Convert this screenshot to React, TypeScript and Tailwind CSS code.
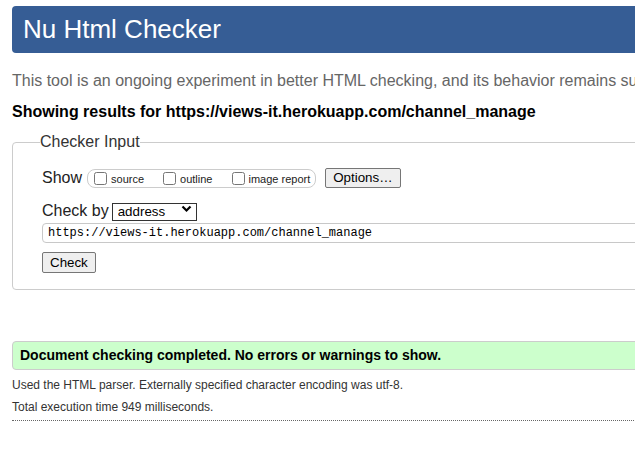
import { useState } from "react";

const url = "https://views-it.herokuapp.com/channel_manage";

const App = () => {
	const [by, setBy] = useState<string>("address");
	const [doc, setDoc] = useState<string>(url);
	return (
		<div className="w-[635px] h-[455px] overflow-hidden bg-white font-['Liberation_Sans',Arial,sans-serif] text-[#222]">
			<div className="w-[1000px] pl-[12px] pt-[6px]">
				<h1 className="h-[47px] flex items-center pl-[11px] pb-[1px] rounded-[4px] bg-[#365d95] text-white text-[26px] font-normal">
					Nu Html Checker
				</h1>

				<p className="mt-[18px] text-[16px] leading-[20px] text-[#666]">
					This tool is an ongoing experiment in better HTML checking, and its behavior remains subject to change
				</p>
				<p className="mt-[11px] text-[16px] leading-[20px] font-bold text-black">
					Showing results for {url}
				</p>

				<fieldset className="mt-[10px] border border-[#ccc] rounded-[4px] pl-[27px] pb-[16px]">
					<legend className="text-[16px] leading-[20px] text-[#333]">Checker Input</legend>
					<div className="pl-[2px] pt-[15px]">
						<div className="flex items-center h-[22px]">
							<span className="text-[16px] leading-[20px]">Show</span>
							<div className="ml-[5px] flex items-center h-[19px] pl-[6px] pr-[5px] border border-[#ccc] rounded-[8px] text-[11px] text-[#222]">
								<label className="flex items-center">
									<input type="checkbox" className="w-[13px] h-[13px]" />
									<span className="ml-[4px] mt-[2px]">source</span>
								</label>
								<label className="flex items-center ml-[19px]">
									<input type="checkbox" className="w-[13px] h-[13px]" />
									<span className="ml-[4px] mt-[2px]">outline</span>
								</label>
								<label className="flex items-center ml-[20px]">
									<input type="checkbox" className="w-[13px] h-[13px]" />
									<span className="ml-[3px] mt-[2px]">image report</span>
								</label>
							</div>
							<button className="ml-[9px] h-[20px] px-[7px] border border-[#767676] rounded-[2px] bg-[#efefef] text-[13.33px] leading-[18px] text-black">
								Options…
							</button>
						</div>

						<div className="flex items-center h-[20px] mt-[12px]">
							<span className="text-[16px] leading-[20px]">Check by</span>
							<span className="relative ml-[3px]">
								<select
									value={by}
									onChange={(e) => setBy(e.target.value)}
									className="appearance-none w-[85px] h-[18px] pl-[5px] border border-[#333] bg-white text-[13.33px] leading-[16px] text-black">
									<option value="address">address</option>
									<option value="file">file upload</option>
									<option value="text">text input</option>
								</select>
								<svg
									className="absolute right-[5px] top-[6px] pointer-events-none"
									width="11"
									height="8"
									viewBox="0 0 11 8">
									<polyline points="1.5,1.5 5.5,5.5 9.5,1.5" fill="none" stroke="#000" strokeWidth="2.2" />
								</svg>
							</span>
						</div>

						<input
							type="url"
							value={doc}
							onChange={(e) => setDoc(e.target.value)}
							className="block mt-[2px] w-full h-[20px] pl-[5px] border border-[#c8c8c8] rounded-l-[4px] font-['Liberation_Mono',monospace] text-[12px] text-black"
						/>

						<button className="block mt-[9px] h-[21px] px-[7px] border border-[#767676] rounded-[2px] bg-[#efefef] text-[13.33px] leading-[19px] text-black">
							Check
						</button>
					</div>
				</fieldset>

				<div className="mt-[51px] border border-[#ccc] rounded-[4px] bg-[#ccffcc] pl-[7px] pt-[5px] pb-[5px]">
					<p className="text-[14px] leading-[17px] font-bold text-black">
						Document checking completed. No errors or warnings to show.
					</p>
				</div>

				<p className="mt-[7px] text-[12px] leading-[16px] text-[#333]">
					Used the HTML parser. Externally specified character encoding was utf-8.
				</p>
				<p className="mt-[6px] text-[12px] leading-[16px] text-[#333]">
					Total execution time 949 milliseconds.
				</p>
				<hr className="mt-[5px] border-0 border-t border-dotted border-[#666]" />
			</div>
		</div>
	);
};

export default App;
